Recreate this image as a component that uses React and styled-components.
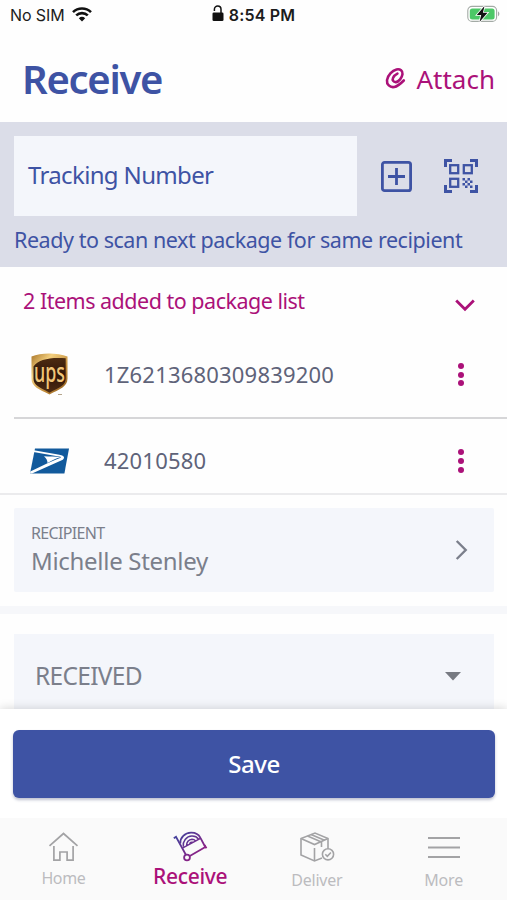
import React from 'react';
import styled, { createGlobalStyle, css } from 'styled-components';

const c = {
  blue: '#3e53a4',
  pink: '#ab1179',
  slate: '#5f6379',
  grey: '#7b7f8b',
  muted: '#bcbcbf',
  field: '#f4f6fb',
  panel: '#dbdde8',
};

const Global = createGlobalStyle`
  * {
    box-sizing: border-box;
  }
  body {
    margin: 0;
    background: #fff;
    font-family: 'Noto Sans', 'Open Sans', sans-serif;
  }
  button {
    border: 0;
    padding: 0;
    background: none;
    font-family: inherit;
    display: flex;
  }
  svg {
    display: block;
    flex: none;
    overflow: visible;
  }
`;

const Screen = styled.div`
  width: 507px;
  height: 900px;
  display: flex;
  flex-direction: column;
  overflow: hidden;
  background: #fefefe;
`;

const text = css`
  font-size: ${p => p.size}px;
  line-height: ${p => p.lh || 30}px;
  letter-spacing: ${p => p.track || 0}px;
  font-weight: ${p => p.weight || 400};
  white-space: nowrap;
`;

const Text = styled.span`
  ${text};
  color: ${p => p.tone};
`;

const StatusBar = styled.div`
  height: 30px;
  display: grid;
  grid-template-columns: 1fr auto 1fr;
  align-items: center;
  padding: 0 6px 0 10px;
  font-family: Inter, 'Liberation Sans', sans-serif;
  font-size: 16px;
  color: #1c1c1c;
`;

const StatusItem = styled.div`
  display: flex;
  align-items: center;
  gap: ${p => p.gap || 7}px;
  justify-content: ${p => p.align || 'flex-start'};
  font-weight: ${p => (p.strong ? 600 : 400)};
  letter-spacing: ${p => (p.strong ? 0.2 : -0.1)}px;
  margin-left: ${p => (p.strong ? -4 : 0)}px;
`;

const Header = styled.header`
  height: 92px;
  display: flex;
  justify-content: space-between;
  align-items: center;
  padding: 6px 12px 1px 22px;
`;

const Title = styled.h1`
  ${text};
  margin: 0;
  color: ${c.blue};
`;

const Attach = styled.button`
  align-items: center;
  gap: 10px;
`;

const ScanPanel = styled.section`
  height: 145px;
  flex: none;
  padding: 14px 14px 0;
  background: ${c.panel};
`;

const ScanRow = styled.div`
  display: flex;
  align-items: center;
`;

const TrackingField = styled.div`
  width: 343px;
  height: 80px;
  padding: 24px 14px 0;
  background: ${c.field};
`;

const ScanActions = styled.div`
  display: flex;
  align-items: center;
  gap: 32px;
  margin-left: 24px;
`;

const Hint = styled.p`
  margin: 9px 0 0;
  display: flex;
`;

const ListHeader = styled.div`
  height: 65px;
  flex: none;
  display: flex;
  justify-content: space-between;
  padding: 19px 32px 0 23px;
  svg {
    margin-top: 13px;
  }
`;

const Item = styled.div`
  height: ${p => (p.last ? 76 : 87)}px;
  flex: none;
  margin-left: ${p => (p.last ? 0 : 14)}px;
  padding: ${p => (p.last ? '10px 43px 0 30px' : '0 43px 0 16px')};
  display: grid;
  grid-template-columns: 74px 1fr auto;
  align-items: center;
  border-bottom: 2px solid ${p => (p.last ? '#ebebed' : '#d6d6d8')};
`;

const ItemNumber = styled.span`
  ${text};
  padding-bottom: 2px;
  color: ${c.slate};
`;

const Dots = styled.button`
  flex-direction: column;
  gap: 2.6px;
`;

const Dot = styled.i`
  width: 6px;
  height: 6px;
  border-radius: 50%;
  background: ${c.pink};
`;

const RecipientCard = styled.div`
  height: 84px;
  flex: none;
  margin: 13px 13px 0 14px;
  padding: 0 26px 0 17px;
  display: flex;
  align-items: center;
  justify-content: space-between;
  background: ${c.field};
  border-radius: 2px;
`;

const Recipient = styled.div`
  display: flex;
  flex-direction: column;
  padding-bottom: 4px;
`;

const Divider = styled.div`
  height: 8px;
  flex: none;
  margin-top: 14px;
  background: #f6f7fa;
`;

const StatusSelect = styled.div`
  height: 84px;
  flex: none;
  margin: 20px 13px 0 14px;
  padding: 0 33px 0 21px;
  display: flex;
  align-items: center;
  justify-content: space-between;
  background: ${c.field};
`;

const Body = styled.main`
  height: 442px;
  flex: none;
  display: flex;
  flex-direction: column;
  overflow: hidden;
`;

const SaveBar = styled.div`
  height: 109px;
  flex: none;
  padding: 21px 12px 0 13px;
  background: #fff;
  box-shadow: 0 -1px 9px rgba(0, 0, 0, 0.15);
  position: relative;
`;

const SaveButton = styled.button`
  width: 100%;
  height: 68px;
  align-items: center;
  justify-content: center;
  border-radius: 6px;
  background: ${c.blue};
  box-shadow: 0 2px 3px rgba(40, 50, 100, 0.3);
`;

const TabBar = styled.nav`
  flex: 1;
  display: grid;
  grid-template-columns: repeat(4, 1fr);
  background: #fafafa;
  position: relative;
`;

const Tab = styled.a`
  display: flex;
  flex-direction: column;
  align-items: center;
  padding-top: 12px;
  color: ${c.muted};
`;

const TabLabel = styled.span`
  ${text};
  color: ${p => (p.active ? c.pink : c.muted)};
  margin-top: ${p => p.top}px;
`;

const Wifi = () => (
  <svg width="20" height="15" viewBox="0 0 20 15" fill="none" stroke="#111" strokeWidth="2.6">
    <path d="M1 4.100a13 13 0 0 1 18 0M4.200 7.400a8.400 8.400 0 0 1 11.600 0" />
    <path d="M10 13.600 6.800 10.300a4.800 4.800 0 0 1 6.400 0z" fill="#111" stroke="none" />
  </svg>
);

const Lock = () => (
  <svg width="12" height="18" viewBox="0 0 12 18">
    <rect x="0.5" y="6.5" width="11" height="8.6" rx="1.3" fill="#111" />
    <path d="M2.400 5V3.300a3.300 3.300 0 0 1 6.600 0V8" fill="none" stroke="#111" strokeWidth="1.5" />
  </svg>
);

const Battery = () => (
  <svg width="34" height="20" viewBox="0 0 34 20">
    <rect x="0.8" y="1.4" width="28.8" height="15" rx="4.2" fill="#fff" stroke="#a3aaa5" strokeWidth="1.1" />
    <rect x="2.8" y="3.4" width="24.8" height="11" rx="2.5" fill="#4cc867" />
    <path d="M31 6.600c1.800.7 1.800 4 0 4.700z" fill="#a3aaa5" />
    <path d="M17.500 1 9.800 10h4.400l-1.700 7 8-9.200h-4.600z" fill="#111" stroke="#fff" strokeWidth="1.6" paintOrder="stroke" />
  </svg>
);

const Paperclip = () => (
  <svg width="21" height="23" viewBox="0 0 21 23" fill="none" stroke={c.pink} strokeWidth="2.600" strokeLinecap="round">
    <path d="M18.800 13.500c-3.500 3.500-6.300 5.900-9.500 6.500-4.500.8-7.800-2.700-7.300-6.900C2.700 8.500 7.200 3.400 11.500 2.400c3.700-.8 6.500 1.400 6 4.700-.5 3.700-3.700 7.700-6.500 8-2.600.2-4-2-2.900-4.300.9-1.800 2.500-3.200 4.300-4.100" />
  </svg>
);

const AddBox = () => (
  <svg width="31" height="31" viewBox="0 0 31 31" fill="none" stroke={c.blue} strokeWidth="2.800">
    <rect x="1.400" y="1.400" width="28.200" height="28.200" rx="2.200" />
    <path d="M15.500 7v17M7 15.500h17" />
  </svg>
);

const QrScan = () => (
  <svg width="34" height="34" viewBox="0 0 34 34" fill="none" stroke={c.blue}>
    <path strokeWidth="3" d="M1.500 8V1.500H8M26 1.500h6.500V8M32.500 26v6.500H26M8 32.500H1.500V26" />
    <g strokeWidth="2.300">
      <rect x="6.200" y="6.200" width="8" height="8" />
      <rect x="19.800" y="6.200" width="8" height="8" />
      <rect x="6.200" y="19.800" width="8" height="8" />
    </g>
    <path
      fill={c.blue}
      stroke="none"
      d="M18.500 19h2.500v2.500h-2.500zM23.500 19h2.500v2.500h-2.500zM21 21.500h2.500V24H21zM26 21.500h2.500V24H26zM18.500 24h2.500v2.500h-2.500zM23.500 24h2.500v2.500h-2.500zM21 26.500h2.500V29H21zM26 26.500h2.500V29H26z"
    />
  </svg>
);

const ChevronDown = () => (
  <svg width="20" height="13" viewBox="0 0 20 13" fill="none" stroke={c.pink} strokeWidth="2.800">
    <path d="m1.200 1.500 8.800 8.700 8.800-8.700" />
  </svg>
);

const ChevronRight = () => (
  <svg width="13" height="20" viewBox="0 0 13 20" fill="none" stroke={c.grey} strokeWidth="2.400">
    <path d="m1.700 1 9 9-9 9" />
  </svg>
);

const Caret = () => (
  <svg width="16" height="9" viewBox="0 0 16 9">
    <path d="M0 0h16L8 8.500z" fill="#777a82" />
  </svg>
);

const UpsLogo = () => (
  <svg width="38" height="43" viewBox="0 0 38 43">
    <defs>
      <linearGradient id="gold" x1="0" y1="0" x2="1" y2="1">
        <stop offset="0" stopColor="#a87529" />
        <stop offset="0.300" stopColor="#f3cf7e" />
        <stop offset="0.650" stopColor="#c08a3a" />
        <stop offset="1" stopColor="#8a5a1c" />
      </linearGradient>
      <linearGradient id="brown" x1="0" y1="0" x2="0" y2="1">
        <stop offset="0" stopColor="#4d2c12" />
        <stop offset="0.500" stopColor="#301608" />
        <stop offset="1" stopColor="#4d2c14" />
      </linearGradient>
    </defs>
    <path d="M1.500 3.500C11-.5 27-.5 37.500 3.500v22c0 8.500-8 10.500-18 16C9 36 1.500 34 1.500 25.500z" fill="url(#gold)" />
    <path d="M3.500 13.500C8 6.500 20 4.100 35.700 5.300v20.200c0 7-6.200 8.800-16.200 14.200C10 34.300 3.500 32.500 3.500 25.500z" fill="url(#brown)" />
    <text
      x="19.500"
      y="28.500"
      textAnchor="middle"
      textLength="31"
      lengthAdjust="spacingAndGlyphs"
      fontFamily="Noto Sans, sans-serif"
      fontWeight="500"
      fontSize="27"
      fill="#f0c679"
    >
      ups
    </text>
    <path d="M28 41.500h4" stroke="#b5a58c" strokeWidth="1" />
  </svg>
);

const UspsLogo = () => (
  <svg width="39" height="26" viewBox="0 0 39 26">
    <path d="M5 .5h34L34.400 25.500H0z" fill="#125a9c" />
    <path d="M3.800 2.300 28 6.600c3.500.6 5.700 1.400 6 2.700.2 1-.7 2.400-2.300 3L2 25.500H0l.3-2L18 15l8.800-3.700c1.600-.7 4-1.300 4.200-2-.3-.7-2.600-1-5-1.300L3.500 4z" fill="#fff" />
    <path d="M14 8.300c5 .3 11 .3 17 .8-4.500 1.300-9.500 3.400-13.500 6C17.700 12.500 16 10 14 8.300z" fill="#fff" />
  </svg>
);

const HomeIcon = () => (
  <svg width="30" height="34" viewBox="0 0 30 34" fill="none" stroke="#a3a3a5" strokeWidth="1.700">
    <path d="M1.500 15.800 15.500 3.500l14 12.300" />
    <path d="M5.900 16v14.200h6V22h7.200v8.200h6V16" />
  </svg>
);

const HandTruck = () => (
  <svg width="36" height="34" viewBox="0 0 36 34" fill="none" stroke="url(#truck)" strokeWidth="1.800">
    <defs>
      <linearGradient id="truck" gradientUnits="userSpaceOnUse" x1="8" y1="4" x2="30" y2="30">
        <stop offset="0" stopColor="#45409b" />
        <stop offset="1" stopColor="#9e1a80" />
      </linearGradient>
    </defs>
    <path d="M1.800 8.300 4 6.800 14 25" />
    <circle cx="15" cy="27.500" r="2.900" />
    <path d="m17.800 26 16-9.300M32.500 15l2 3.200" />
    <path d="M8.300 13.500C8 7.500 13 2.900 19 2.700c4.500-.1 7.800 2 9.300 5L33 16.500" />
    <path strokeWidth="1.500" d="M10.800 17.800 28.500 8.300M11.300 16.500c-.8-5 3-10.300 8.500-10.500 3.200-.1 5.300 1 6.600 3M14.700 15.500c-.4-3 2-6.200 5.300-6.300 1.700 0 2.700.6 3.400 1.500M17.800 13.800c.2-1.300 1.400-2 2.700-1.500" />
  </svg>
);

const BoxCheck = () => (
  <svg width="36" height="34" viewBox="0 0 36 34" fill="none" stroke="#a3a3a5" strokeWidth="1.600">
    <path d="M23 28 15.500 31 2 25V8.500L16 3l13 5.500v10.200" />
    <path d="m2 8.500 13.500 6 13.500-6M15.500 18V31M8.500 6l14 6v5M12 4.500l13.500 5.700" />
    <circle cx="29" cy="24.300" r="5.600" fill="#fafafa" />
    <path d="m26.300 24.300 2 2 3.600-3.800" />
  </svg>
);

const MenuIcon = () => (
  <svg width="32" height="34" viewBox="0 0 32 34" stroke="#a3a3a5" strokeWidth="2">
    <path d="M0 8h32M0 17.500h32M0 27h32" />
  </svg>
);

const items = [
  { number: '1Z6213680309839200', Logo: UpsLogo },
  { number: '42010580', Logo: UspsLogo },
];

const tabs = [
  { label: 'Home', Icon: HomeIcon, size: 16, top: -1, track: -0.4 },
  { label: 'Receive', Icon: HandTruck, size: 21, top: -3, active: true, weight: 500, track: -0.3 },
  { label: 'Deliver', Icon: BoxCheck, size: 16, top: 1, track: -0.2 },
  { label: 'More', Icon: MenuIcon, size: 16, top: 1, track: -0.2 },
];

export default function App() {
  return (
    <Screen>
      <Global />
      <StatusBar>
        <StatusItem>
          No SIM <Wifi />
        </StatusItem>
        <StatusItem strong={1} gap={5}>
          <Lock /> 8:54 PM
        </StatusItem>
        <StatusItem align="flex-end">
          <Battery />
        </StatusItem>
      </StatusBar>
      <Header>
        <Title size={40} weight={600} track={-1.3} lh={50}>
          Receive
        </Title>
        <Attach>
          <Paperclip />
          <Text size={26} track={0} tone={c.pink}>
            Attach
          </Text>
        </Attach>
      </Header>
      <ScanPanel>
        <ScanRow>
          <TrackingField>
            <Text size={24} track={-0.65} tone={c.blue}>
              Tracking Number
            </Text>
          </TrackingField>
          <ScanActions>
            <AddBox />
            <QrScan />
          </ScanActions>
        </ScanRow>
        <Hint>
          <Text size={21.5} track={-0.45} tone={c.blue}>
            Ready to scan next package for same recipient
          </Text>
        </Hint>
      </ScanPanel>
      <Body>
        <ListHeader>
          <Text size={21.5} track={-0.5} tone={c.pink}>
            2 Items added to package list
          </Text>
          <ChevronDown />
        </ListHeader>
        {items.map(({ number, Logo }, i) => (
          <Item key={number} last={i === items.length - 1 ? 1 : 0}>
            <Logo />
            <ItemNumber size={22} track={0.2}>
              {number}
            </ItemNumber>
            <Dots>
              <Dot />
              <Dot />
              <Dot />
            </Dots>
          </Item>
        ))}
        <RecipientCard>
          <Recipient>
            <Text size={16} track={-0.65} lh={26} tone={c.grey}>
              RECIPIENT
            </Text>
            <Text size={24} track={-0.3} tone={c.grey}>
              Michelle Stenley
            </Text>
          </Recipient>
          <ChevronRight />
        </RecipientCard>
        <Divider />
        <StatusSelect>
          <Text size={24.5} track={-0.7} tone={c.grey}>
            RECEIVED
          </Text>
          <Caret />
        </StatusSelect>
      </Body>
      <SaveBar>
        <SaveButton>
          <Text size={24} weight={500} track={-0.5} tone="#fff">
            Save
          </Text>
        </SaveButton>
      </SaveBar>
      <TabBar>
        {tabs.map(({ label, Icon, ...rest }) => (
          <Tab key={label}>
            <Icon />
            <TabLabel {...rest}>{label}</TabLabel>
          </Tab>
        ))}
      </TabBar>
    </Screen>
  );
}
